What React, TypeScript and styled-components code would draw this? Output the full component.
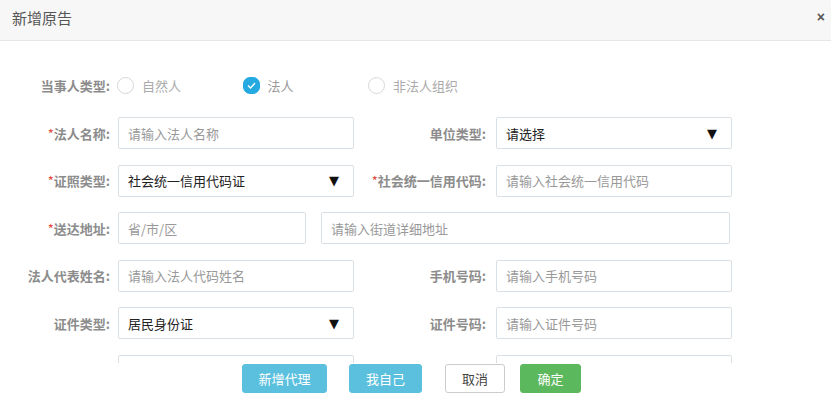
import React from "react";
import styled, { createGlobalStyle } from "styled-components";

const Global = createGlobalStyle`
  html, body { margin: 0; padding: 0; background: #fff; }
  body { font-family: "Noto Sans CJK SC", "Noto Sans", sans-serif; font-size: 13px; color: #333; }
  * { box-sizing: border-box; }
`;

const Dialog = styled.div`
  width: 831px;
  height: 398px;
  display: flex;
  flex-direction: column;
  background: #fff;
  overflow: hidden;
`;

const Header = styled.div`
  height: 41px;
  flex: none;
  background: #f7f7f7;
  border-bottom: 1px solid #e6e6e6;
  display: flex;
  align-items: center;
  justify-content: space-between;
  padding: 0 6px 6px 12px;
`;

const Title = styled.div`
  font-size: 15px;
  color: #555;
`;

const Close = styled.div`
  font-size: 14px;
  font-weight: bold;
  color: #555;
  font-family: "Liberation Sans", sans-serif;
  line-height: 1;
`;

const Body = styled.div`
  height: 322px;
  flex: none;
  overflow: hidden;
  padding-top: 28.5px;
  display: flex;
  flex-direction: column;
  gap: 15.5px;
`;

const Row = styled.div`
  display: flex;
  align-items: center;
  height: 32px;
  flex: none;
`;

const Label = styled.div<{ $w: number }>`
  width: ${(p) => p.$w}px;
  flex: none;
  text-align: right;
  font-size: 13px;
  font-weight: bold;
  color: #8c8c8c;
  white-space: nowrap;
`;

const Star = styled.span`
  color: #e04a3a;
  font-weight: normal;
`;

const Field = styled.div<{ $w: number; $ml: number }>`
  width: ${(p) => p.$w}px;
  height: 32px;
  margin-left: ${(p) => p.$ml}px;
  flex: none;
  border: 1px solid #d9e0e5;
  border-radius: 2px;
  display: flex;
  align-items: center;
  justify-content: space-between;
  padding: 0 14px 0 9px;
  font-size: 13px;
`;

const Placeholder = styled.span`
  color: #999;
`;

const Value = styled.span`
  color: #222;
`;

const Arrow = styled.span`
  font-size: 13px;
  color: #111;
  font-family: "DejaVu Sans", sans-serif;
`;

const Radios = styled.div`
  display: flex;
  margin-left: 7px;
`;

const RadioItem = styled.div<{ $active?: boolean }>`
  width: 125.5px;
  display: flex;
  align-items: center;
  gap: 8px;
  color: ${(p) => (p.$active ? "#999" : "#aaa")};
  font-size: 13px;
`;

const Circle = styled.span<{ $on?: boolean }>`
  width: 17px;
  height: 17px;
  border-radius: ${(p) => (p.$on ? "7px" : "50%")};
  border: 1px solid ${(p) => (p.$on ? "#24a9e1" : "#d8d8d8")};
  background: ${(p) => (p.$on ? "#24a9e1" : "#fff")};
  display: flex;
  align-items: center;
  justify-content: center;
`;

const Footer = styled.div`
  flex: 1;
  display: flex;
  justify-content: center;
  align-items: flex-start;
  padding: 1px 8px 0 0;
`;

const Btn = styled.button<{ $kind: "info" | "default" | "ok"; $w: number; $mr: number }>`
  width: ${(p) => p.$w}px;
  height: 29px;
  margin-right: ${(p) => p.$mr}px;
  border-radius: 3px;
  font-family: inherit;
  font-size: 13px;
  cursor: pointer;
  border: 1px solid
    ${(p) => (p.$kind === "info" ? "#5bc0de" : p.$kind === "ok" ? "#5cb85c" : "#ccc")};
  background: ${(p) => (p.$kind === "info" ? "#5bc0de" : p.$kind === "ok" ? "#5cb85c" : "#fff")};
  color: ${(p) => (p.$kind === "default" ? "#444" : "#fff")};
  padding: 0;
`;

const L = 110;
const R = 132;

export default function App() {
  return (
    <>
      <Global />
      <Dialog>
        <Header>
          <Title>新增原告</Title>
          <Close>×</Close>
        </Header>
        <Body>
          <Row>
            <Label $w={L}>当事人类型:</Label>
            <Radios>
              <RadioItem>
                <Circle />
                自然人
              </RadioItem>
              <RadioItem $active>
                <Circle $on>
                  <svg width="9" height="7" viewBox="0 0 9 7">
                    <path d="M1 3.5 L3.5 6 L8 1" fill="none" stroke="#fff" strokeWidth="1.4" />
                  </svg>
                </Circle>
                法人
              </RadioItem>
              <RadioItem>
                <Circle />
                非法人组织
              </RadioItem>
            </Radios>
          </Row>
          <Row>
            <Label $w={L}><Star>*</Star>法人名称:</Label>
            <Field $w={236} $ml={8}><Placeholder>请输入法人名称</Placeholder></Field>
            <Label $w={R}>单位类型:</Label>
            <Field $w={236} $ml={10}><Value>请选择</Value><Arrow>▼</Arrow></Field>
          </Row>
          <Row>
            <Label $w={L}><Star>*</Star>证照类型:</Label>
            <Field $w={236} $ml={8}><Value>社会统一信用代码证</Value><Arrow>▼</Arrow></Field>
            <Label $w={R}><Star>*</Star>社会统一信用代码:</Label>
            <Field $w={236} $ml={10}><Placeholder>请输入社会统一信用代码</Placeholder></Field>
          </Row>
          <Row>
            <Label $w={L}><Star>*</Star>送达地址:</Label>
            <Field $w={188} $ml={8}><Placeholder>省/市/区</Placeholder></Field>
            <Field $w={409} $ml={15}><Placeholder>请输入街道详细地址</Placeholder></Field>
          </Row>
          <Row>
            <Label $w={L}>法人代表姓名:</Label>
            <Field $w={236} $ml={8}><Placeholder>请输入法人代码姓名</Placeholder></Field>
            <Label $w={R}>手机号码:</Label>
            <Field $w={236} $ml={10}><Placeholder>请输入手机号码</Placeholder></Field>
          </Row>
          <Row>
            <Label $w={L}>证件类型:</Label>
            <Field $w={236} $ml={8}><Value>居民身份证</Value><Arrow>▼</Arrow></Field>
            <Label $w={R}>证件号码:</Label>
            <Field $w={236} $ml={10}><Placeholder>请输入证件号码</Placeholder></Field>
          </Row>
          <Row>
            <Label $w={L}></Label>
            <Field $w={236} $ml={8} />
            <Label $w={R}></Label>
            <Field $w={236} $ml={10} />
          </Row>
        </Body>
        <Footer>
          <Btn $kind="info" $w={85} $mr={22}>新增代理</Btn>
          <Btn $kind="info" $w={73} $mr={23}>我自己</Btn>
          <Btn $kind="default" $w={60} $mr={15}>取消</Btn>
          <Btn $kind="ok" $w={61} $mr={0}>确定</Btn>
        </Footer>
      </Dialog>
    </>
  );
}
